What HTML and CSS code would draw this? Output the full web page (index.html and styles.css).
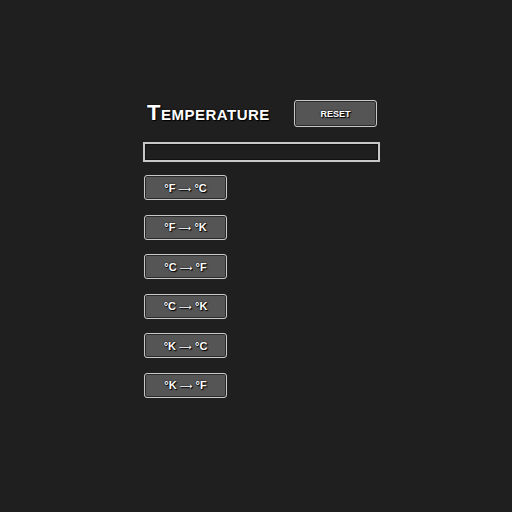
FILE: index.html
```html
<!DOCTYPE html>
<html>
<head>
<meta charset="utf-8">
<link rel="stylesheet" href="styles.css">
</head>
<body>
<main class="panel">
  <div class="header">
    <h1 class="title">Temperature</h1>
    <button class="btn reset">Reset</button>
  </div>
  <input class="field" type="text">
  <div class="list">
    <button class="btn conv">°F <span class="arrow">⟶</span> °C</button>
    <button class="btn conv">°F <span class="arrow">⟶</span> °K</button>
    <button class="btn conv">°C <span class="arrow">⟶</span> °F</button>
    <button class="btn conv">°C <span class="arrow">⟶</span> °K</button>
    <button class="btn conv">°K <span class="arrow">⟶</span> °C</button>
    <button class="btn conv">°K <span class="arrow">⟶</span> °F</button>
  </div>
</main>
</body>
</html>
```
FILE: styles.css
```css
html, body {
  margin: 0;
  padding: 0;
  background: #1f1f1f;
  width: 512px;
  height: 512px;
}
.panel {
  margin-left: 143px;
  padding-top: 100px;
  width: 237px;
  font-family: "Liberation Sans", Arial, sans-serif;
}
.header {
  display: flex;
  align-items: center;
  justify-content: space-between;
  height: 27px;
}
.title {
  margin: 0 0 0 4px;
  font-size: 22px;
  letter-spacing: 0.5px;
  font-weight: bold;
  font-variant: small-caps;
  color: #fff;
  text-shadow: 0 0 2px #000, 1px 1px 1px #000;
  position: relative;
  top: -1px;
}
.btn {
  box-sizing: border-box;
  background: #555;
  color: #fff;
  border: 1px solid #c8c8c8;
  border-radius: 3px;
  box-shadow: inset 0 0 0 1px #2a2a2a;
  font-family: "Liberation Sans", Arial, sans-serif;
  font-weight: bold;
  text-shadow: 0 0 2px #000, 1px 1px 1px #000;
  padding: 0;
}
.reset {
  width: 83px;
  height: 27px;
  margin-right: 3px;
  font-size: 9px;
  text-transform: uppercase;
}
.field {
  display: block;
  box-sizing: border-box;
  margin-top: 15px;
  width: 237px;
  height: 20px;
  background: #1f1f1f;
  border: 2px solid #c8c8c8;
  box-shadow: inset 0 0 0 1px #111;
  padding: 0;
}
.list {
  display: flex;
  flex-direction: column;
  align-items: flex-start;
  gap: 14.6px;
  margin-top: 13px;
  margin-left: 1px;
}
.conv {
  width: 83px;
  height: 25px;
  font-size: 11px;
  font-variant: small-caps;
}
.arrow {
  font-family: "DejaVu Sans", sans-serif;
  font-size: 9px;
  font-weight: normal;
}
```
